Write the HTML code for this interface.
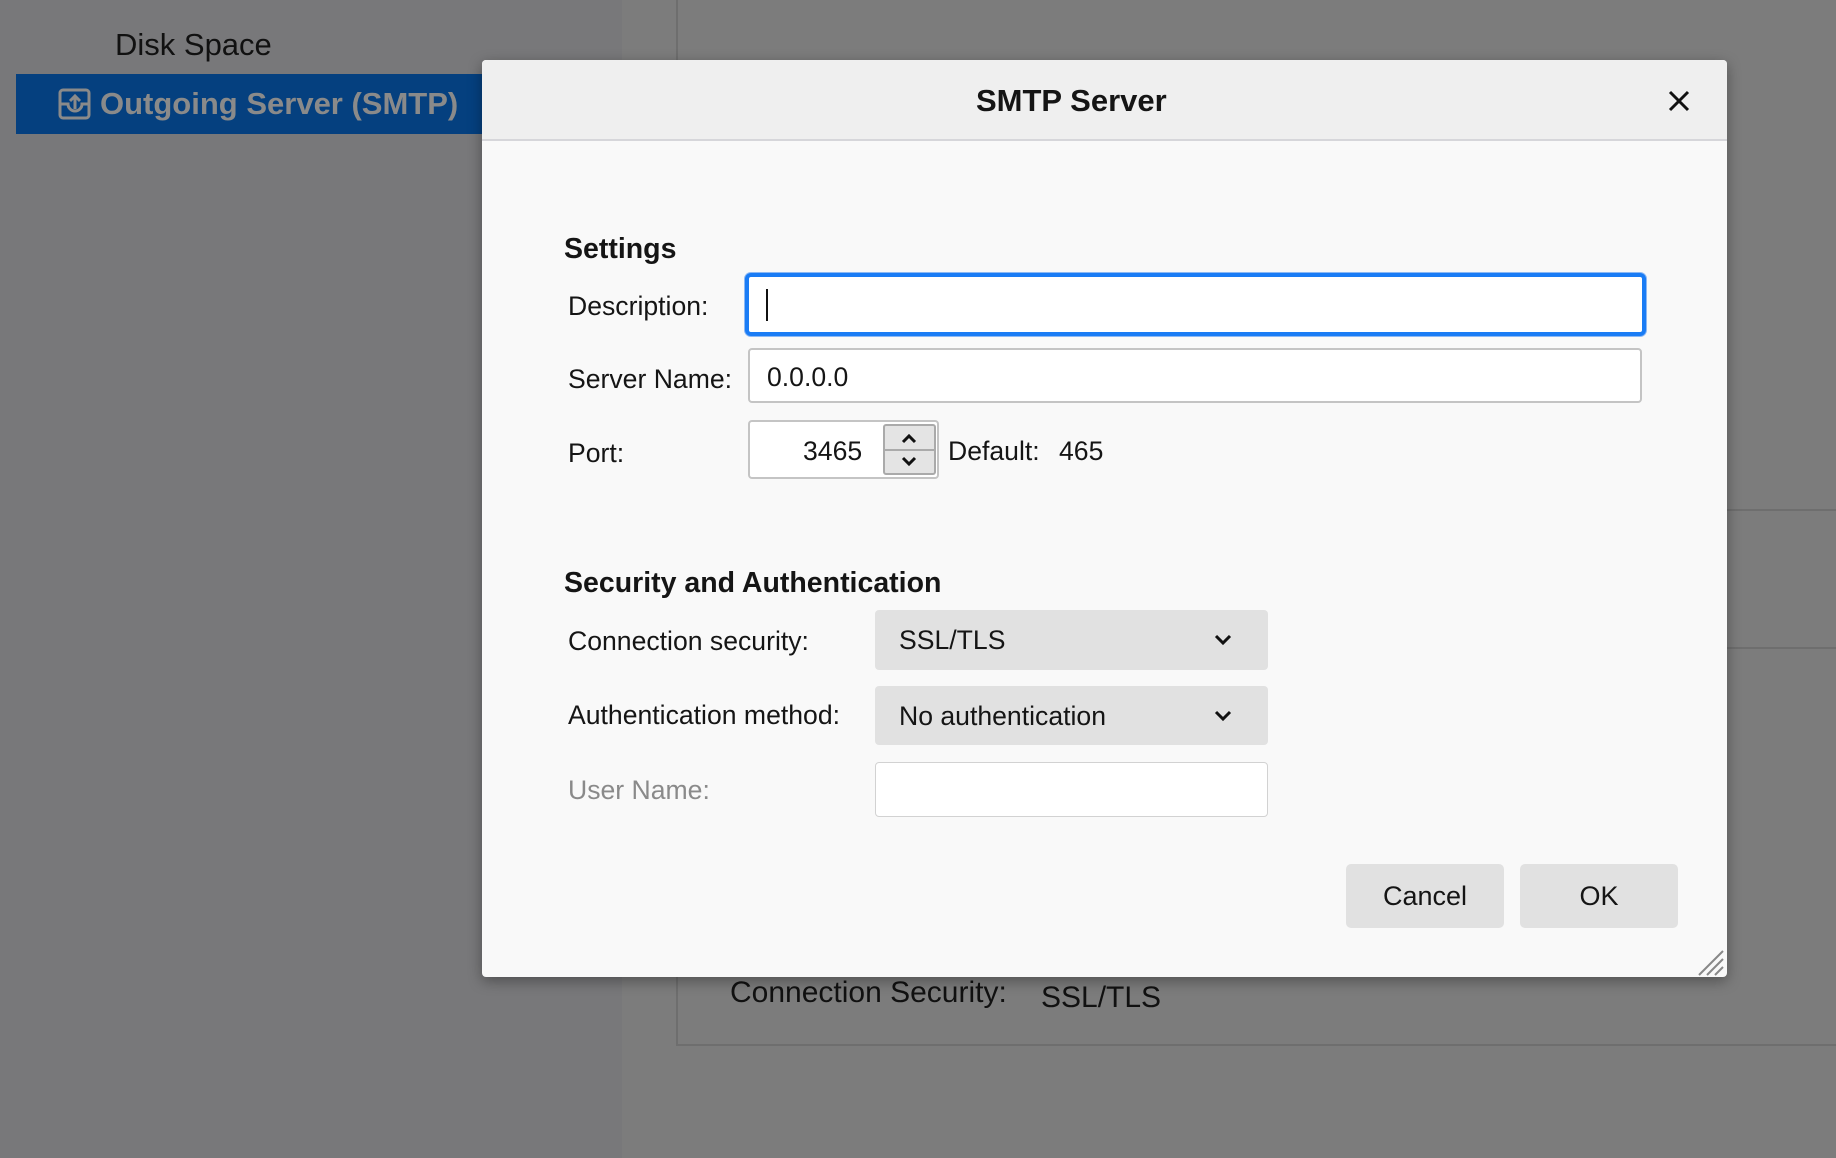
<!DOCTYPE html>
<html><head><meta charset="utf-8"><style>
*{box-sizing:border-box;margin:0;padding:0}
body{width:1836px;height:1158px;overflow:hidden;background:#7c7c7c;font-family:"Liberation Sans",Arial,sans-serif;position:relative;color:#151515}
.a{position:absolute}
.lbl{position:absolute;font-size:26.6px;line-height:30px;transform:translateY(-50%)}
.inp{position:absolute;background:#fff;border:2px solid #c4c4c4;border-radius:4px}
.sel{position:absolute;background:#e1e1e1;border-radius:4px;font-size:26px}
.btn{position:absolute;background:#e1e1e1;border-radius:5px;font-size:27px;text-align:center;line-height:65px}
</style></head><body>
<div class="a" style="left:0;top:0;width:622px;height:1158px;background:#78787a"></div>
<div class="a" style="left:676px;top:0;width:2px;height:1046px;background:#6e6e6e"></div>
<div class="a" style="left:676px;top:1044px;width:1160px;height:2px;background:#6e6e6e"></div>
<div class="a" style="left:1727px;top:509px;width:109px;height:2px;background:#6e6e6e"></div>
<div class="a" style="left:1727px;top:647px;width:109px;height:2px;background:#6e6e6e"></div>
<div class="a" style="left:115px;top:25px;font-size:31px;line-height:40px;color:#111">Disk Space</div>
<div class="a" style="left:16px;top:74px;width:470px;height:60px;background:#05407f"></div>
<svg class="a" style="left:58px;top:88px" width="34" height="32" viewBox="0 0 34 32"><rect x="2" y="2" width="29" height="28" rx="3" fill="none" stroke="#8a8a8a" stroke-width="3"/><path d="M2 16h8a7 7 0 0 0 14 0h7" fill="none" stroke="#8a8a8a" stroke-width="3"/><path d="M17 21V8M12 13l5-5 5 5" fill="none" stroke="#8a8a8a" stroke-width="3"/></svg>
<div class="a" style="left:100px;top:84px;font-size:31px;line-height:40px;font-weight:bold;color:#8a8a8a">Outgoing Server (SMTP)</div>
<div class="a" style="left:730px;top:975px;font-size:30px;line-height:36px;color:#111">Connection Security:</div>
<div class="a" style="left:1041px;top:980px;font-size:30px;line-height:36px;color:#111">SSL/TLS</div>

<div class="a" style="left:482px;top:60px;width:1245px;height:917px;background:#f9f9f9;border-radius:4px;box-shadow:0 4px 14px rgba(0,0,0,.35);overflow:hidden">
 <div class="a" style="left:0;top:0;width:1245px;height:81px;background:#efefef;border-bottom:2px solid #d6d6da"></div>
 <div class="a" style="left:494px;top:22px;font-size:31px;font-weight:bold;line-height:38px">SMTP Server</div>
 <svg class="a" style="left:1186px;top:30px" width="22" height="22"><path d="M2 2L20 20M20 2L2 20" stroke="#111" stroke-width="3"/></svg>
</div>
<div class="a" style="left:564px;top:231px;font-size:28.5px;font-weight:bold;line-height:36px">Settings</div>
<div class="lbl" style="left:568px;top:306px">Description:</div>
<div class="a" style="left:745px;top:273px;width:901px;height:63px;border:4px solid #1a7cf5;border-radius:6px;background:#fff;box-shadow:0 0 0 1px #8ab8f5"></div>
<div class="a" style="left:766px;top:289px;width:2px;height:32px;background:#111"></div>
<div class="lbl" style="left:568px;top:379px">Server Name:</div>
<div class="inp" style="left:748px;top:348px;width:894px;height:55px"></div>
<div class="lbl" style="left:767px;top:377px">0.0.0.0</div>
<div class="lbl" style="left:568px;top:453px">Port:</div>
<div class="inp" style="left:748px;top:420px;width:191px;height:59px"></div>
<div class="lbl" style="left:803px;top:451px">3465</div>
<div class="a" style="left:883px;top:424px;width:53px;height:51px;background:#e4e4e4;border:2px solid #aaa;border-radius:3px"></div>
<div class="a" style="left:885px;top:449px;width:49px;height:2px;background:#aaa"></div>
<svg class="a" style="left:899px;top:430px" width="20" height="40"><path d="M4 12l6-6 6 6M4 28l6 6 6-6" fill="none" stroke="#111" stroke-width="3"/></svg>
<div class="lbl" style="left:948px;top:451px">Default:</div>
<div class="lbl" style="left:1059px;top:451px">465</div>
<div class="a" style="left:564px;top:565px;font-size:28.5px;font-weight:bold;line-height:36px">Security and Authentication</div>
<div class="lbl" style="left:568px;top:641px">Connection security:</div>
<div class="sel" style="left:875px;top:610px;width:393px;height:60px"></div>
<div class="lbl" style="left:899px;top:640px">SSL/TLS</div>
<svg class="a" style="left:1214px;top:634px" width="18" height="12"><path d="M2 2l7 7 7-7" fill="none" stroke="#111" stroke-width="3"/></svg>
<div class="lbl" style="left:568px;top:715px">Authentication method:</div>
<div class="sel" style="left:875px;top:686px;width:393px;height:59px"></div>
<div class="lbl" style="left:899px;top:716px">No authentication</div>
<svg class="a" style="left:1214px;top:710px" width="18" height="12"><path d="M2 2l7 7 7-7" fill="none" stroke="#111" stroke-width="3"/></svg>
<div class="lbl" style="left:568px;top:790px;color:#8a8a8a">User Name:</div>
<div class="inp" style="left:875px;top:762px;width:393px;height:55px;border-color:#d2d2d2;border-width:1px"></div>
<div class="btn" style="left:1346px;top:864px;width:158px;height:64px">Cancel</div>
<div class="btn" style="left:1520px;top:864px;width:158px;height:64px">OK</div>
<svg class="a" style="left:1698px;top:950px" width="26" height="26"><path d="M1 25L25 1M9 25L25 9M17 25L25 17" stroke="#888" stroke-width="2"/></svg>
</body></html>
